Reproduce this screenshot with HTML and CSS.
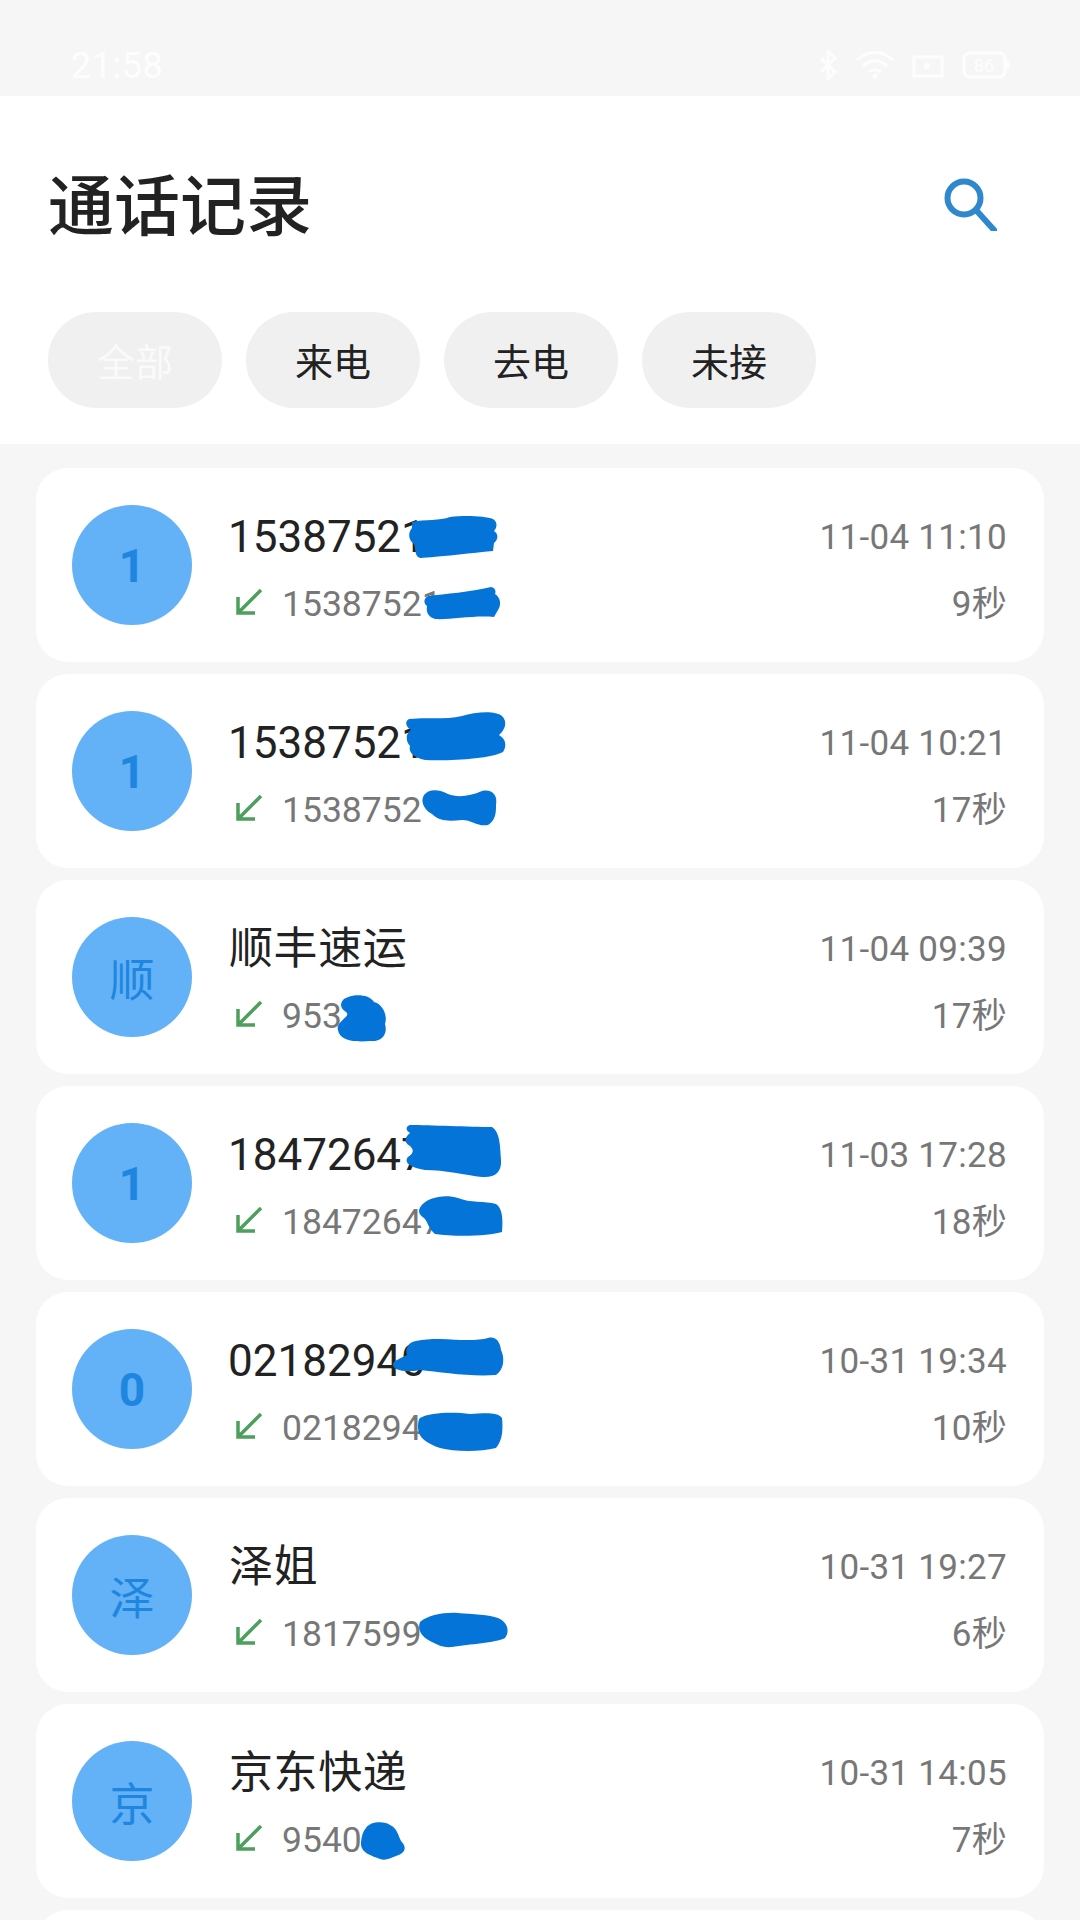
FILE: index.html
```html
<!DOCTYPE html>
<html lang="zh-CN">
<head>
<meta charset="utf-8">
<title>通话记录</title>
<link rel="stylesheet" href="styles.css">
</head>
<body>
<div class="page">
  <div class="statusbar">
    <span class="clock">21:58</span>
    <div class="status-icons">
      <svg class="ic-bt" viewBox="0 0 20 30"><path d="M3 8l14 14-7 7V1l7 7-14 14"/></svg>
      <svg class="ic-wifi" viewBox="0 0 38 28"><path d="M1 9c11-10 25-10 36 0M7 15c8-7 16-7 24 0M13 21c4-3 8-3 12 0"/><circle cx="19" cy="25" r="2.5"/></svg>
      <svg class="ic-box" viewBox="0 0 32 26"><path d="M2 5h28v19H2z"/><circle cx="15" cy="14" r="3"/></svg>
      <svg class="ic-batt" viewBox="0 0 48 28"><rect x="2" y="2" width="41" height="24" rx="6"/><path d="M46 10v8"/><text x="22" y="21" class="batt-num">86</text></svg>
    </div>
  </div>

  <header class="header">
    <div class="title-row">
      <h1 class="title">通话记录</h1>
      <svg class="search" viewBox="0 0 54 54"><circle cx="20" cy="21" r="16.5"/><path d="M32 33l18 20"/></svg>
    </div>
    <div class="chips">
      <span class="chip chip-active">全部</span>
      <span class="chip">来电</span>
      <span class="chip">去电</span>
      <span class="chip">未接</span>
    </div>
  </header>

  <main class="list">
    <article class="card">
      <div class="avatar avatar-digit">1</div>
      <div class="info">
        <div class="row"><span class="name">15387521</span><span class="meta">11-04 11:10</span></div>
        <div class="row"><span class="number"><svg class="arrow" viewBox="0 0 28 28"><path d="M26 2L3 25M3 9v16h17"/></svg>15387521</span><span class="meta">9秒</span></div>
      </div>
    </article>
    <article class="card">
      <div class="avatar avatar-digit">1</div>
      <div class="info">
        <div class="row"><span class="name">15387521</span><span class="meta">11-04 10:21</span></div>
        <div class="row"><span class="number"><svg class="arrow" viewBox="0 0 28 28"><path d="M26 2L3 25M3 9v16h17"/></svg>1538752</span><span class="meta">17秒</span></div>
      </div>
    </article>
    <article class="card">
      <div class="avatar">顺</div>
      <div class="info">
        <div class="row"><span class="name name-cjk">顺丰速运</span><span class="meta">11-04 09:39</span></div>
        <div class="row"><span class="number"><svg class="arrow" viewBox="0 0 28 28"><path d="M26 2L3 25M3 9v16h17"/></svg>953</span><span class="meta">17秒</span></div>
      </div>
    </article>
    <article class="card">
      <div class="avatar avatar-digit">1</div>
      <div class="info">
        <div class="row"><span class="name">18472647</span><span class="meta">11-03 17:28</span></div>
        <div class="row"><span class="number"><svg class="arrow" viewBox="0 0 28 28"><path d="M26 2L3 25M3 9v16h17"/></svg>18472647</span><span class="meta">18秒</span></div>
      </div>
    </article>
    <article class="card">
      <div class="avatar avatar-digit">0</div>
      <div class="info">
        <div class="row"><span class="name">02182940</span><span class="meta">10-31 19:34</span></div>
        <div class="row"><span class="number"><svg class="arrow" viewBox="0 0 28 28"><path d="M26 2L3 25M3 9v16h17"/></svg>0218294</span><span class="meta">10秒</span></div>
      </div>
    </article>
    <article class="card">
      <div class="avatar">泽</div>
      <div class="info">
        <div class="row"><span class="name name-cjk">泽姐</span><span class="meta">10-31 19:27</span></div>
        <div class="row"><span class="number"><svg class="arrow" viewBox="0 0 28 28"><path d="M26 2L3 25M3 9v16h17"/></svg>1817599</span><span class="meta">6秒</span></div>
      </div>
    </article>
    <article class="card">
      <div class="avatar">京</div>
      <div class="info">
        <div class="row"><span class="name name-cjk">京东快递</span><span class="meta">10-31 14:05</span></div>
        <div class="row"><span class="number"><svg class="arrow" viewBox="0 0 28 28"><path d="M26 2L3 25M3 9v16h17"/></svg>9540</span><span class="meta">7秒</span></div>
      </div>
    </article>
    <article class="card"></article>
  </main>

  <svg class="redactions" viewBox="0 0 1080 1920">
    <path d="M412 522C425 519 440 521 450 517C465 515 485 516 493 519C498 522 497 528 494 531C499 534 498 540 494 543L493 551C470 553 450 556 420 558C414 556 416 548 414 544C408 540 408 532 412 528Z"/>
    <path d="M428 596C445 594 470 592 491 587C496 588 496 592 495 594C500 597 502 604 498 610L494 617C475 615 450 620 435 619C428 617 426 612 427 606C423 603 424 598 428 596Z"/>
    <path d="M409 719C425 717 445 720 462 716C475 712 495 710 502 716C508 722 505 730 499 735C506 739 507 746 503 752C490 759 450 761 425 760C414 758 408 752 410 746C405 740 406 733 411 730C405 726 405 721 409 719Z"/>
    <path d="M424 795C430 788 440 790 448 794C458 798 470 796 482 791C492 789 498 795 496 805C496 812 496 820 488 825C478 827 472 820 462 820C450 821 440 822 432 814C424 810 420 801 424 795Z"/>
    <path d="M343 1000C350 994 368 993 374 1002C382 1004 388 1014 385 1024C388 1034 382 1042 370 1041C358 1042 340 1042 338 1030C335 1022 352 1016 346 1012C340 1008 340 1004 343 1000Z"/>
    <path d="M410 1125C430 1125 470 1127 492 1127C500 1132 500 1145 501 1160C502 1172 495 1178 482 1177C465 1175 445 1170 425 1170C412 1168 403 1163 408 1157C414 1153 414 1150 410 1146C403 1142 405 1137 410 1133C405 1130 406 1126 410 1125Z"/>
    <path d="M421 1206C428 1197 445 1194 458 1198C470 1203 485 1201 496 1204C503 1208 503 1222 502 1232C490 1236 455 1237 435 1234C428 1228 428 1222 424 1218C418 1214 418 1210 421 1206Z"/>
    <path d="M408 1346C410 1341 420 1339 440 1339C460 1340 478 1341 488 1338C496 1336 500 1342 501 1350C505 1358 504 1370 496 1375C470 1377 440 1372 420 1370C405 1373 392 1370 393 1364C394 1360 402 1358 407 1355C406 1352 406 1348 408 1346Z"/>
    <path d="M420 1418C430 1412 455 1412 470 1414C485 1413 498 1412 502 1418C503 1428 503 1440 496 1448C480 1452 455 1452 440 1448C428 1444 418 1438 418 1428C418 1424 418 1420 420 1418Z"/>
    <path d="M420 1622C428 1615 445 1612 458 1613C472 1614 490 1615 498 1618C508 1622 510 1632 505 1638C495 1643 470 1644 452 1647C442 1648 436 1644 430 1641C422 1637 417 1630 420 1622Z"/>
    <path d="M366 1828C370 1821 385 1821 390 1825C397 1828 398 1835 401 1841C407 1847 406 1853 396 1856C390 1858 386 1861 380 1859C372 1856 362 1853 361 1845C361 1840 362 1832 366 1828Z"/>
  </svg>
</div>
</body>
</html>
```

FILE: styles.css
```css
* { box-sizing: border-box; margin: 0; padding: 0; }
html, body { width: 1080px; height: 1920px; overflow: hidden; }
body {
  background: #f6f6f6;
  color: #222;
  font-family: Roboto, "Noto Sans CJK SC", sans-serif;
}
.page { position: relative; width: 1080px; height: 1920px; overflow: hidden; }

.statusbar {
  height: 96px;
  padding: 48px 70px 0 71px;
  display: flex;
  justify-content: space-between;
  align-items: flex-start;
  color: #fff;
  filter: blur(0.7px);
  opacity: 0.85;
}
.clock { font-size: 36px; line-height: 36px; letter-spacing: 0.5px; }
.status-icons { display: flex; align-items: center; gap: 18px; padding-top: 2px; }
.status-icons svg { fill: none; stroke: #fff; stroke-width: 3; display: block; }
.status-icons circle { fill: #fff; stroke: none; }
.ic-bt { width: 20px; height: 30px; }
.ic-wifi { width: 38px; height: 28px; }
.ic-box { width: 32px; height: 26px; }
.ic-batt { width: 48px; height: 28px; }
.status-icons .batt-num { fill: #fff; stroke: none; font-size: 18px; text-anchor: middle; font-family: Roboto, sans-serif; }

.header { height: 348px; background: #fff; padding: 0 48px; }
.title-row { height: 216px; display: flex; align-items: center; justify-content: space-between; padding-right: 34px; }
.title { font-size: 66px; font-weight: 500; line-height: 1; color: #222; padding-top: 8px; }
.search { width: 54px; height: 54px; fill: none; stroke: #2f88cd; stroke-width: 6; stroke-linecap: round; }

.chips { display: flex; gap: 24px; }
.chip {
  width: 174px;
  height: 96px;
  border-radius: 48px;
  background: #f0f0f0;
  color: #222;
  font-size: 38px;
  line-height: 102px;
  text-align: center;
}
.chip-active { color: #fafafa; }

.list { padding: 24px 36px 0; display: flex; flex-direction: column; gap: 12px; }
.card {
  flex: none;
  height: 194px;
  background: #fff;
  border-radius: 32px;
  padding: 0 37px 0 36px;
  display: flex;
  align-items: center;
  gap: 37px;
}
.avatar {
  flex: none;
  width: 120px;
  height: 120px;
  border-radius: 50%;
  background: #63b1f6;
  color: #1f86e0;
  font-size: 45px;
  font-weight: 400;
  display: flex;
  align-items: center;
  justify-content: center;
}
.avatar-digit { font-weight: 700; font-size: 46px; padding-top: 2px; }

.info { flex: 1; display: flex; flex-direction: column; padding-top: 11px; }
.row { height: 67px; display: flex; align-items: center; justify-content: space-between; }
.name { font-size: 44px; line-height: 67px; color: #222; margin-left: -1px; }
.name-cjk { letter-spacing: 0.6px; margin-left: 0; }
.number { display: flex; align-items: center; font-size: 35.5px; line-height: 67px; color: #777; }
.meta { font-size: 35px; line-height: 67px; color: #777; letter-spacing: 0.3px; }
.arrow { width: 28px; height: 28px; margin: -4px 19px 0 6px; fill: none; stroke: #4c9f5c; stroke-width: 3.5; flex: none; }

.redactions { position: absolute; left: 0; top: 0; width: 1080px; height: 1920px; fill: #0574d8; pointer-events: none; }
```
